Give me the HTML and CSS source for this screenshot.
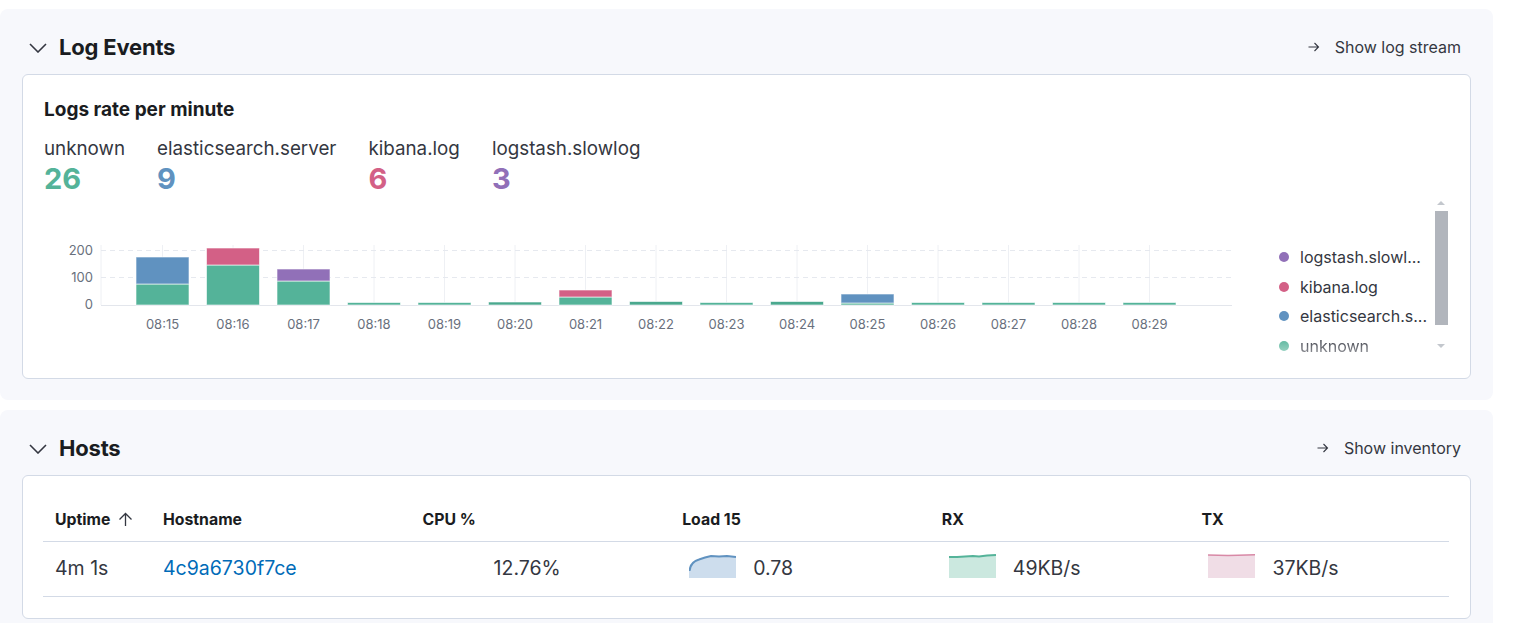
FILE: index.html
```html
<!DOCTYPE html>
<html>
<head>
<meta charset="utf-8">
<link rel="stylesheet" href="styles.css">
</head>
<body>
<div class="page">
  <section class="section">
    <div class="section-head">
      <div class="section-title">
        <svg class="chevron" width="18" height="10" viewBox="0 0 18 10"><path d="M1 1l8 8 8-8" fill="none" stroke="#343741" stroke-width="1.6"/></svg>
        <h2>Log Events</h2>
      </div>
      <a class="head-link">
        <svg width="12" height="12" viewBox="0 0 12 12"><path d="M0.5 6h10M6.5 2l4 4-4 4" fill="none" stroke="#343741" stroke-width="1.1"/></svg>
        <span>Show log stream</span>
      </a>
    </div>
    <div class="panel logs-panel">
      <h3 class="panel-title">Logs rate per minute</h3>
      <div class="stats">
        <div class="stat"><div class="stat-label">unknown</div><div class="stat-value c-green">26</div></div>
        <div class="stat"><div class="stat-label">elasticsearch.server</div><div class="stat-value c-blue">9</div></div>
        <div class="stat"><div class="stat-label">kibana.log</div><div class="stat-value c-pink">6</div></div>
        <div class="stat"><div class="stat-label">logstash.slowlog</div><div class="stat-value c-purple">3</div></div>
      </div>
      <div class="chart-row">
        <svg class="chart" width="1225" height="160" viewBox="43 200 1225 160">
          <g class="grid-v" stroke="#eef0f4" stroke-width="1">
            <line x1="101" y1="245" x2="101" y2="305"/>
            <line x1="162.5" y1="245" x2="162.5" y2="305"/>
            <line x1="233" y1="245" x2="233" y2="305"/>
            <line x1="303.5" y1="245" x2="303.5" y2="305"/>
            <line x1="374" y1="245" x2="374" y2="305"/>
            <line x1="444.5" y1="245" x2="444.5" y2="305"/>
            <line x1="515" y1="245" x2="515" y2="305"/>
            <line x1="585.5" y1="245" x2="585.5" y2="305"/>
            <line x1="656" y1="245" x2="656" y2="305"/>
            <line x1="726.5" y1="245" x2="726.5" y2="305"/>
            <line x1="797" y1="245" x2="797" y2="305"/>
            <line x1="867.5" y1="245" x2="867.5" y2="305"/>
            <line x1="938" y1="245" x2="938" y2="305"/>
            <line x1="1008.5" y1="245" x2="1008.5" y2="305"/>
            <line x1="1079" y1="245" x2="1079" y2="305"/>
            <line x1="1149.5" y1="245" x2="1149.5" y2="305"/>
          </g>
          <g stroke="#e6e9ef" stroke-width="1" stroke-dasharray="5 4">
            <line x1="101" y1="250.5" x2="1232" y2="250.5"/>
            <line x1="101" y1="277.5" x2="1232" y2="277.5"/>
          </g>
          <line x1="101" y1="305.5" x2="1232" y2="305.5" stroke="#e3e6ec" stroke-width="1"/>
          <g class="axis-y" font-family="Inter, sans-serif" font-size="13" fill="#69707d" text-anchor="end">
            <text x="93" y="255">200</text>
            <text x="93" y="282">100</text>
            <text x="93" y="309">0</text>
          </g>
          <g stroke="#ffffff" stroke-opacity="0.6" stroke-width="1">
            <rect x="136" y="284" width="53" height="21" fill="#54b399"/>
            <rect x="136" y="257" width="53" height="27" fill="#6092c0"/>
            <rect x="206.5" y="265" width="53" height="40" fill="#54b399"/>
            <rect x="206.5" y="248" width="53" height="17" fill="#d36086"/>
            <rect x="277" y="281" width="53" height="24" fill="#54b399"/>
            <rect x="277" y="269" width="53" height="12" fill="#9170b8"/>
            <rect x="347.5" y="302.5" width="53" height="2.5" fill="#54b399"/>
            <rect x="418" y="302.5" width="53" height="2.5" fill="#54b399"/>
            <rect x="488.5" y="302" width="53" height="3" fill="#4aa88e"/>
            <rect x="559" y="297" width="53" height="8" fill="#54b399"/>
            <rect x="559" y="290" width="53" height="7" fill="#d36086"/>
            <rect x="629.5" y="301.5" width="53" height="3.5" fill="#4aa88e"/>
            <rect x="700" y="302.5" width="53" height="2.5" fill="#54b399"/>
            <rect x="770.5" y="301.5" width="53" height="3.5" fill="#4aa88e"/>
            <rect x="841" y="303" width="53" height="2" fill="#54b399"/>
            <rect x="841" y="294" width="53" height="9" fill="#6092c0"/>
            <rect x="911.5" y="302.5" width="53" height="2.5" fill="#54b399"/>
            <rect x="982" y="302.5" width="53" height="2.5" fill="#54b399"/>
            <rect x="1052.5" y="302.5" width="53" height="2.5" fill="#54b399"/>
            <rect x="1123" y="302.5" width="53" height="2.5" fill="#54b399"/>
          </g>
          <g class="axis-x" font-family="Inter, sans-serif" font-size="13" fill="#69707d" text-anchor="middle">
            <text x="162.5" y="329">08:15</text>
            <text x="233" y="329">08:16</text>
            <text x="303.5" y="329">08:17</text>
            <text x="374" y="329">08:18</text>
            <text x="444.5" y="329">08:19</text>
            <text x="515" y="329">08:20</text>
            <text x="585.5" y="329">08:21</text>
            <text x="656" y="329">08:22</text>
            <text x="726.5" y="329">08:23</text>
            <text x="797" y="329">08:24</text>
            <text x="867.5" y="329">08:25</text>
            <text x="938" y="329">08:26</text>
            <text x="1008.5" y="329">08:27</text>
            <text x="1079" y="329">08:28</text>
            <text x="1149.5" y="329">08:29</text>
          </g>
        </svg>
        <div class="legend">
          <ul class="legend-list">
            <li><span class="dot bg-purple"></span><span class="legend-text">logstash.slowl...</span></li>
            <li><span class="dot bg-pink"></span><span class="legend-text">kibana.log</span></li>
            <li><span class="dot bg-blue"></span><span class="legend-text">elasticsearch.s...</span></li>
            <li class="faded"><span class="dot bg-green"></span><span class="legend-text">unknown</span></li>
          </ul>
          <div class="scrollbar">
            <span class="sb-up"></span>
            <span class="sb-thumb"></span>
            <span class="sb-down"></span>
          </div>
        </div>
      </div>
    </div>
  </section>

  <section class="section">
    <div class="section-head">
      <div class="section-title">
        <svg class="chevron" width="18" height="10" viewBox="0 0 18 10"><path d="M1 1l8 8 8-8" fill="none" stroke="#343741" stroke-width="1.6"/></svg>
        <h2>Hosts</h2>
      </div>
      <a class="head-link">
        <svg width="12" height="12" viewBox="0 0 12 12"><path d="M0.5 6h10M6.5 2l4 4-4 4" fill="none" stroke="#343741" stroke-width="1.1"/></svg>
        <span>Show inventory</span>
      </a>
    </div>
    <div class="panel hosts-panel">
      <table class="hosts">
        <colgroup>
          <col class="col-uptime"><col class="col-wide"><col class="col-wide"><col class="col-wide"><col class="col-wide"><col class="col-wide">
        </colgroup>
        <thead>
          <tr>
            <th><span class="th-inner">Uptime
              <svg class="sort" width="15" height="15" viewBox="0 0 15 15"><path d="M7.5 14V1.5M1.5 7.5l6-6 6 6" fill="none" stroke="#343741" stroke-width="1.3"/></svg></span></th>
            <th>Hostname</th>
            <th>CPU %</th>
            <th>Load 15</th>
            <th>RX</th>
            <th>TX</th>
          </tr>
        </thead>
        <tbody>
          <tr>
            <td>4m 1s</td>
            <td><a class="host-link">4c9a6730f7ce</a></td>
            <td><div class="metric"><span class="spark"></span><span>12.76%</span></div></td>
            <td><div class="metric">
              <svg class="spark" width="47" height="24" viewBox="0 0 47 24"><path d="M0 24V17C1 11 5 7 10 5.5L16 3.5L22 2L30 2.5L38 2L47 3V24Z" fill="#cddded"/><path d="M0.5 17C1 11 5 7 10 5.5L16 3.5L22 2L30 2.5L38 2L47 3" fill="none" stroke="#6092c0" stroke-width="2"/></svg>
              <span>0.78</span></div></td>
            <td><div class="metric">
              <svg class="spark" width="47" height="24" viewBox="0 0 47 24"><path d="M0 3L8 3L16 2.5L24 2L30 2.5L38 1.5L47 1V24H0Z" fill="#cbe8df"/><path d="M0 3L8 3L16 2.5L24 2L30 2.5L38 1.5L47 1" fill="none" stroke="#54b399" stroke-width="2"/></svg>
              <span>49KB/s</span></div></td>
            <td><div class="metric">
              <svg class="spark" width="47" height="24" viewBox="0 0 47 24"><path d="M0 1L20 1.5L30 1.2L47 0.8V24H0Z" fill="#f0dde6"/><path d="M0 1L20 1.5L30 1.2L47 0.8" fill="none" stroke="#d889a6" stroke-width="1.6"/></svg>
              <span>37KB/s</span></div></td>
          </tr>
        </tbody>
      </table>
    </div>
  </section>
</div>
</body>
</html>
```

FILE: styles.css
```css
* { box-sizing: border-box; }
html, body { margin: 0; padding: 0; background: #ffffff; }
body {
  font-family: Inter, "Noto Sans", sans-serif;
  color: #343741;
  overflow: hidden;
}
.page {
  width: 1493px;
  padding-top: 9px;
  display: flex;
  flex-direction: column;
  gap: 10px;
}
.section {
  background: #f7f8fc;
  border-radius: 8px;
  padding: 22px 22px 21px 22px;
}
.section-head {
  height: 32px;
  display: flex;
  align-items: center;
  justify-content: space-between;
  margin-bottom: 11px;
}
.section-title {
  display: flex;
  align-items: center;
  gap: 12px;
  padding-left: 7px;
}
.chevron { display: block; margin-top: 1px; }
.section-title h2 {
  margin: 0;
  font-size: 22px;
  font-weight: 700;
  color: #1a1c21;
  letter-spacing: -0.2px;
}
.head-link {
  display: flex;
  align-items: center;
  gap: 15px;
  padding-right: 10px;
  font-size: 16px;
  color: #343741;
}
.head-link svg { display: block; }
.panel {
  background: #ffffff;
  border: 1px solid #d3dae6;
  border-radius: 6px;
}
.logs-panel {
  padding: 23px 20px 18px 21px;
}
.panel-title {
  margin: 0;
  font-size: 19px;
  line-height: 24px;
  font-weight: 700;
  color: #1a1c21;
}
.stats {
  display: flex;
  gap: 32px;
  margin-top: 15px;
}
.stat-label {
  font-size: 18.8px;
  line-height: 24px;
  color: #343741;
}
.stat-value {
  font-size: 29px;
  line-height: 34px;
  padding-top: 1px;
  font-weight: 700;
}
.c-green { color: #54b399; }
.c-blue { color: #6092c0; }
.c-pink { color: #d36086; }
.c-purple { color: #9170b8; }
.bg-green { background: #54b399; }
.bg-blue { background: #6092c0; }
.bg-pink { background: #d36086; }
.bg-purple { background: #9170b8; }
.chart-row {
  display: flex;
  height: 160px;
  margin-top: 4px;
  margin-left: -1px;
}
.chart { display: block; flex: none; }
.legend {
  display: flex;
  width: 182px;
  height: 160px;
}
.legend-list {
  list-style: none;
  margin: 0;
  padding: 42px 0 0 11px;
  width: 166px;
  height: 160px;
  overflow: hidden;
}
.legend-list li {
  display: flex;
  align-items: center;
  gap: 11px;
  height: 29.7px;
  font-size: 16px;
  color: #343741;
}
.legend-list li.faded {
  -webkit-mask-image: linear-gradient(to bottom, rgba(0,0,0,1) 20%, rgba(0,0,0,0.35) 100%);
  mask-image: linear-gradient(to bottom, rgba(0,0,0,1) 20%, rgba(0,0,0,0.35) 100%);
}
.dot {
  width: 10px;
  height: 10px;
  border-radius: 50%;
  flex: none;
}
.legend-text {
  white-space: nowrap;
}
.scrollbar {
  width: 14px;
  height: 155px;
  display: flex;
  flex-direction: column;
  align-items: center;
  padding-top: 1px;
}
.sb-up {
  width: 0; height: 0;
  border-left: 4px solid transparent;
  border-right: 4px solid transparent;
  border-bottom: 4px solid #c3c7cd;
}
.sb-thumb {
  width: 13px;
  height: 114px;
  background: #b1b5bc;
  margin-top: 6px;
}
.sb-down {
  width: 0; height: 0;
  border-left: 4px solid transparent;
  border-right: 4px solid transparent;
  border-top: 4px solid #c3c7cd;
  margin-top: 19px;
}
.hosts-panel {
  padding: 21px 21px 21px 20px;
}
.hosts {
  width: 1406px;
  table-layout: fixed;
  border-collapse: collapse;
}
.col-uptime { width: 108px; }
.col-wide { width: 259.6px; }
.hosts th {
  height: 44px;
  padding: 1px 12px 0 12px;
  text-align: left;
  font-size: 15.8px;
  font-weight: 700;
  color: #1a1c21;
  border-bottom: 1px solid #d3dae6;
}
.th-inner {
  display: inline-flex;
  align-items: center;
  gap: 8px;
}
.sort { display: block; }
.hosts td {
  height: 55px;
  padding: 0 12px 2px 12px;
  font-size: 19.5px;
  color: #343741;
  border-bottom: 1px solid #d3dae6;
}
.host-link { color: #006bb8; }
.metric {
  display: flex;
  align-items: center;
  gap: 17px;
  padding-left: 7px;
}
.spark {
  display: block;
  width: 47px;
  height: 24px;
  flex: none;
  margin-top: -4px;
}
```
